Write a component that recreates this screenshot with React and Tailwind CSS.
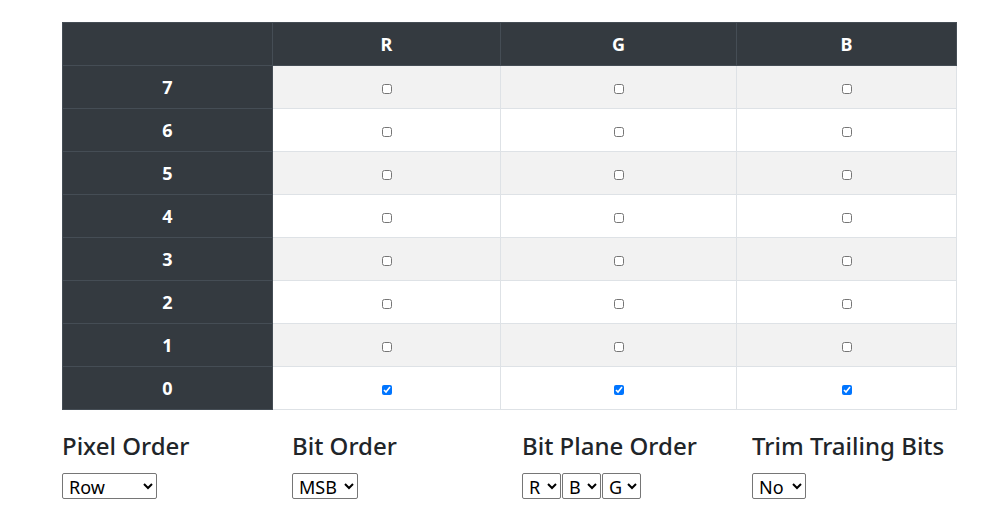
import React from "react";

const rows = [7, 6, 5, 4, 3, 2, 1, 0];

function Sel({ w, value, options }) {
  return (
    <select
      defaultValue={value}
      className="h-[26px] border border-[#767676] rounded-[2px] bg-white text-[18px] leading-none text-black pl-[2px]"
      style={{ width: w, fontFamily: '"Noto Sans", sans-serif' }}
    >
      {options.map((o) => (
        <option key={o}>{o}</option>
      ))}
    </select>
  );
}

export default function App() {
  return (
    <div className="bg-white w-[982px] h-[522px] overflow-hidden text-[#212529]" style={{ fontFamily: '"Noto Sans", sans-serif' }}>
      <div className="ml-[62px] mt-[22px] w-[894px]">
        <table className="w-[894px] border-collapse table-fixed">
          <colgroup>
            <col className="w-[210px]" />
            <col className="w-[228px]" />
            <col className="w-[236px]" />
            <col className="w-[220px]" />
          </colgroup>
          <thead>
            <tr className="h-[43px] bg-[#343a40] text-white">
              <th className="border border-[#454d55]"></th>
              {["R", "G", "B"].map((c) => (
                <th key={c} className="border border-[#454d55] text-[18px] font-bold text-center">{c}</th>
              ))}
            </tr>
          </thead>
          <tbody>
            {rows.map((r, i) => (
              <tr key={r} className={`h-[43px] ${i % 2 === 0 ? "bg-[#f2f2f2]" : "bg-white"}`}>
                <th className="bg-[#343a40] text-white border border-[#454d55] text-[18px] font-bold text-center">{r}</th>
                {[0, 1, 2].map((c) => (
                  <td key={c} className="border border-[#dee2e6] text-center align-middle">
                    <input type="checkbox" defaultChecked={r === 0} className="w-[10px] h-[10px] align-middle m-0" />
                  </td>
                ))}
              </tr>
            ))}
          </tbody>
        </table>
        <div className="grid grid-cols-[230px_230px_230px_230px] mt-[21px]">
          <div>
            <h4 className="text-[24px] leading-[29px] font-medium mb-[13px]">Pixel Order</h4>
            <Sel w={95} value="Row" options={["Row", "Column"]} />
          </div>
          <div>
            <h4 className="text-[24px] leading-[29px] font-medium mb-[13px]">Bit Order</h4>
            <Sel w={66} value="MSB" options={["MSB", "LSB"]} />
          </div>
          <div>
            <h4 className="text-[24px] leading-[29px] font-medium mb-[13px]">Bit Plane Order</h4>
            <div className="flex gap-[1px]">
              <Sel w={39} value="R" options={["R", "G", "B"]} />
              <Sel w={39} value="B" options={["R", "G", "B"]} />
              <Sel w={39} value="G" options={["R", "G", "B"]} />
            </div>
          </div>
          <div>
            <h4 className="text-[24px] leading-[29px] font-medium mb-[13px]">Trim Trailing Bits</h4>
            <Sel w={54} value="No" options={["No", "Yes"]} />
          </div>
        </div>
      </div>
    </div>
  );
}
